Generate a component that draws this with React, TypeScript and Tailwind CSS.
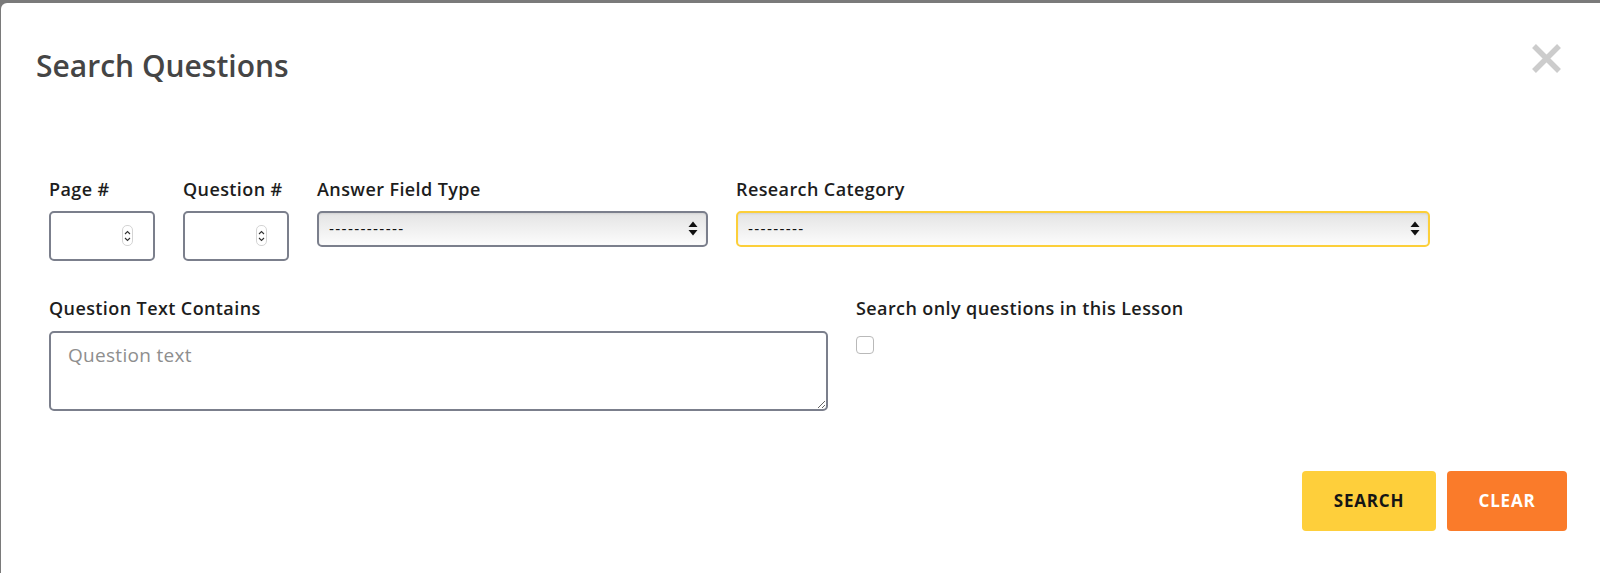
import React from "react";

const font = { fontFamily: "'Open Sans', 'Noto Sans', sans-serif" };
const selectFont = { fontFamily: "'Liberation Sans', Arial, sans-serif" };

const labelCls =
  "text-[18px] leading-[20px] font-semibold tracking-[0.4px] text-[#1d1d1d]";

function Spinner() {
  return (
    <div className="absolute right-[22px] top-[14px] w-[11px] h-[21px] rounded-[5px] border border-[#d4d4d4] bg-white flex flex-col items-center justify-center gap-[2px]">
      <svg width="7" height="5" viewBox="0 0 7 5">
        <path d="M1 4 L3.5 1.5 L6 4" fill="none" stroke="#333" strokeWidth="1.1" />
      </svg>
      <svg width="7" height="5" viewBox="0 0 7 5">
        <path d="M1 1 L3.5 3.5 L6 1" fill="none" stroke="#333" strokeWidth="1.1" />
      </svg>
    </div>
  );
}

function SelectArrows() {
  return (
    <svg
      className="absolute right-[10px] top-[10px] pointer-events-none"
      width="10"
      height="15"
      viewBox="0 0 10 15"
    >
      <path d="M5 0.5 L9.5 6 L0.5 6 Z" fill="#111" />
      <path d="M0.5 9 L9.5 9 L5 14.5 Z" fill="#111" />
    </svg>
  );
}

function NumberField({ label }: { label: string }) {
  return (
    <div className="flex flex-col">
      <label className={labelCls + " mb-[12px]"}>{label}</label>
      <div className="relative w-[106px] h-[50px]">
        <input
          type="text"
          className="w-full h-full rounded-[5px] border-2 border-[#7b7f8c] bg-white outline-none px-2"
        />
        <Spinner />
      </div>
    </div>
  );
}

function SelectField({
  label,
  width,
  dashes,
  focused,
}: {
  label: string;
  width: string;
  dashes: string;
  focused?: boolean;
}) {
  return (
    <div className="flex flex-col">
      <label className={labelCls + " mb-[12px]"}>{label}</label>
      <div className={"relative h-[36px] " + width}>
        <select
          style={selectFont}
          className={
            "appearance-none w-full h-full rounded-[5px] border-2 bg-linear-to-b from-[#e4e4e4] to-[#fcfcfc] pl-[10px] text-[15px] tracking-[1.3px] text-[#111] outline-none shadow-[inset_0_1px_2px_rgba(0,0,0,0.08)] " +
            (focused ? "border-[#fccf3a]" : "border-[#7b7f8c]")
          }
          defaultValue=""
        >
          <option value="">{dashes}</option>
        </select>
        <SelectArrows />
      </div>
    </div>
  );
}

export default function App() {
  return (
    <div className="min-h-screen bg-[#7a7a7a] pt-[3px] pl-[1px]" style={font}>
      <div className="bg-white rounded-tl-[6px] min-h-[570px]">
        {/* header */}
        <div className="flex justify-between items-start pl-[35px] pr-[38px] pt-[41px]">
          <h1 className="mt-[3px] text-[30px] leading-[38px] font-semibold text-[#454545]">
            Search Questions
          </h1>
          <button className="w-[31px] h-[31px] mt-[-1px]">
            <svg width="31" height="31" viewBox="0 0 31 31">
              <path d="M3 3 L28 28 M28 3 L3 28" stroke="#cccccc" strokeWidth="5.5" />
            </svg>
          </button>
        </div>

        {/* form */}
        <div className="px-[48px] pt-[94px]">
          <div className="flex gap-[28px]">
            <NumberField label="Page #" />
            <NumberField label="Question #" />
            <SelectField label="Answer Field Type" width="w-[391px]" dashes="------------" />
            <SelectField
              label="Research Category"
              width="w-[694px]"
              dashes="---------"
              focused
            />
          </div>

          <div className="flex gap-[28px] mt-[37px]">
            <div className="flex flex-col">
              <label className={labelCls + " mb-[13px]"}>Question Text Contains</label>
              <textarea
                placeholder="Question text"
                className="w-[779px] h-[80px] rounded-[5px] border-2 border-[#7b7f8c] px-[17px] py-[8px] text-[19px] tracking-[0.3px] text-[#333] placeholder:text-[#8e8e8e] outline-none"
              />
            </div>
            <div className="flex flex-col">
              <label className={labelCls + " mb-[18px]"}>
                Search only questions in this Lesson
              </label>
              <input
                type="checkbox"
                className="appearance-none w-[18px] h-[18px] rounded-[4px] border border-[#b9b9b9] bg-white"
              />
            </div>
          </div>
        </div>

        <div className="flex justify-end gap-[11px] pr-[33px] mt-[60px]">
          <button className="w-[134px] h-[60px] rounded-[4px] bg-[#fecf3b] text-[17px] tracking-[0.8px] font-bold text-[#151515]">
            SEARCH
          </button>
          <button className="w-[120px] h-[60px] rounded-[4px] bg-[#fa7b2a] text-[17px] tracking-[0.8px] font-bold text-white">
            CLEAR
          </button>
        </div>
      </div>
    </div>
  );
}
